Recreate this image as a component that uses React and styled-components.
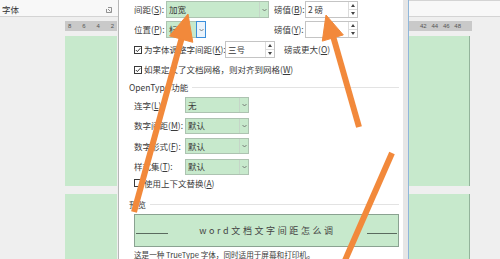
import React from 'react';
import styled, { createGlobalStyle } from 'styled-components';

const Global = createGlobalStyle`
  html, body { margin: 0; padding: 0; }
  body {
    width: 500px; height: 259px; overflow: hidden; background: #eeeeee;
    font-family: "Noto Sans CJK SC", "Noto Sans", sans-serif;
    color: #333;
  }
`;

const FONT = `"Noto Sans CJK SC", "Noto Sans", sans-serif`;

const Screen = styled.div`
  position: relative;
  width: 500px;
  height: 259px;
  display: flex;
  overflow: hidden;
  background: #eeeeee;
  font-family: ${FONT};
`;

/* ---------- side panes (document view) ---------- */
const SidePane = styled.div`
  flex: none;
  width: ${p => p.$w}px;
  display: flex;
  flex-direction: column;
  background: #efefef;
  border-right: ${p => (p.$right ? '1px solid #b7b7b7' : 'none')};
  border-left: ${p => (p.$left ? '1px solid #8fb6da' : 'none')};
`;

const RibbonStrip = styled.div`
  height: 17px;
  flex: none;
  background: #f8f8f8;
  border-bottom: 1px solid #d4d4d4;
  border-top: ${p => (p.$top ? '1px solid #d4d4d4' : 'none')};
  box-sizing: border-box;
  display: flex;
  align-items: flex-end;
  justify-content: space-between;
  padding: 0 6px 1px 2px;
  font-size: 8.5px;
  color: #333;
`;

const Launcher = styled.svg`
  width: 6px;
  height: 6px;
  margin-bottom: 2px;
`;

const PaneBody = styled.div`
  flex: 1;
  display: flex;
  flex-direction: row;
`;

const Spacer = styled.div`
  flex: none;
  width: ${p => p.$w}px;
`;

const DocColumn = styled.div`
  flex: none;
  width: ${p => p.$w}px;
  display: flex;
  flex-direction: column;
`;

const Ruler = styled.div`
  margin-top: 4px;
  height: 10px;
  width: ${p => p.$w}px;
  background: #c9c9c9;
  display: flex;
  align-items: center;
  justify-content: space-between;
  padding: 0 ${p => p.$pad}px;
  box-sizing: border-box;
  font-size: 6px;
  color: #555;
  font-family: "Liberation Sans", sans-serif;
`;

const Page = styled.div`
  margin-top: ${p => p.$mt}px;
  height: ${p => (p.$h ? `${p.$h}px` : 'auto')};
  flex: ${p => (p.$h ? 'none' : '1')};
  width: ${p => p.$w}px;
  background: #c7e9cc;
  box-sizing: border-box;
  border-right: ${p => (p.$edge ? '1px solid #93b39b' : 'none')};
`;

const GapStrip = styled.div`
  flex: none;
  width: 5px;
  background: #e6e6e6;
`;

/* ---------- dialog ---------- */
const Dialog = styled.div`
  flex: none;
  width: 284px;
  background: #ffffff;
  display: flex;
  flex-direction: column;
  padding: 1px 4px 0 15px;
  box-sizing: border-box;
  font-size: 8.5px;
  color: #3a3a3a;
`;

const Row = styled.div`
  display: flex;
  align-items: center;
  height: ${p => p.$h || 17}px;
  margin-top: ${p => p.$mt || 0}px;
  flex: none;
`;

const Label = styled.span`
  flex: none;
  width: ${p => (p.$w ? `${p.$w}px` : 'auto')};
  margin-left: ${p => p.$ml || 0}px;
  white-space: nowrap;
  line-height: 1;
`;

const Combo = styled.div`
  flex: none;
  display: flex;
  width: ${p => p.$w}px;
  height: 100%;
  box-sizing: border-box;
  border: 1px solid #adc3b1;
  background: #c7e9cc;
  margin-left: ${p => p.$ml || 0}px;
`;

const ComboText = styled.span`
  flex: 1;
  display: flex;
  align-items: center;
  padding-left: 2px;
  line-height: 1;
  white-space: nowrap;
  overflow: hidden;
`;

const ComboArrow = styled.span`
  flex: none;
  width: ${p => (p.$hot ? 10 : 9)}px;
  display: flex;
  align-items: center;
  justify-content: center;
  box-sizing: border-box;
  border-left: 1px solid ${p => (p.$hot ? '#3b8fdb' : '#c5d6c8')};
  ${p => p.$hot && 'border: 1px solid #3b8fdb; background: #eaf3fb; margin: -1px -1px -1px 0; height: calc(100% + 2px);'}
`;

const Spin = styled.div`
  flex: none;
  display: flex;
  width: ${p => p.$w}px;
  height: 100%;
  box-sizing: border-box;
  border: 1px solid #c4c4c4;
  background: #fff;
  margin-left: ${p => p.$ml || 0}px;
`;

const SpinText = styled.span`
  flex: 1;
  display: flex;
  align-items: center;
  padding-left: 2px;
  line-height: 1;
  white-space: nowrap;
`;

const SpinButtons = styled.span`
  flex: none;
  width: 8px;
  display: flex;
  flex-direction: column;
  border-left: 1px solid #dcdcdc;
`;

const SpinHalf = styled.span`
  flex: 1;
  display: flex;
  align-items: center;
  justify-content: center;
  border-top: ${p => (p.$bottom ? '1px solid #dcdcdc' : 'none')};
`;

const CheckBox = styled.span`
  flex: none;
  width: 8px;
  height: 8px;
  box-sizing: border-box;
  border: 1px solid #3a3a3a;
  background: #fff;
  margin-right: 2px;
  display: flex;
  align-items: center;
  justify-content: center;
`;

const SectionHead = styled.div`
  display: flex;
  align-items: center;
  height: 10px;
  margin-top: ${p => p.$mt}px;
  margin-left: -5px;
  flex: none;
`;

const SectionTitle = styled.span`
  flex: none;
  line-height: 1;
  margin-right: 4px;
`;

const SectionRule = styled.span`
  flex: 1;
  height: 0;
  border-top: 1px solid #e3e3e3;
`;

const Preview = styled.div`
  margin-top: 5px;
  flex: none;
  width: 265px;
  height: 33px;
  box-sizing: border-box;
  border: 1px solid #8aa291;
  background: #c7e9cc;
  display: flex;
  align-items: flex-start;
  padding: 0 1px;
`;

const BaseLine = styled.span`
  flex: none;
  width: ${p => p.$w}px;
  margin-top: 18px;
  border-top: 1px solid #5a6a5e;
`;

const PreviewText = styled.span`
  flex: 1;
  align-self: center;
  text-align: center;
  font-size: 9px;
  letter-spacing: 2.6px;
  color: #444;
  white-space: nowrap;
  line-height: 1;
`;

const Note = styled.div`
  margin-top: 3px;
  font-size: 7.6px;
  line-height: 9px;
  white-space: nowrap;
`;

const Overlay = styled.svg`
  position: absolute;
  left: 0;
  top: 0;
  width: 500px;
  height: 259px;
  pointer-events: none;
`;

const Chevron = () => (
  <svg width="5" height="4" viewBox="0 0 5 4">
    <polyline points="0.5,1 2.5,3 4.5,1" fill="none" stroke="#666" strokeWidth="0.8" />
  </svg>
);

const Tri = ({ down }) => (
  <svg width="4" height="3" viewBox="0 0 4 3">
    <polygon points={down ? '0,0 4,0 2,3' : '0,3 4,3 2,0'} fill="#444" />
  </svg>
);

const Check = () => (
  <svg width="6" height="6" viewBox="0 0 6 6">
    <polyline points="0.8,3 2.4,4.6 5.3,1.2" fill="none" stroke="#222" strokeWidth="0.9" />
  </svg>
);

const Dropdown = ({ w, ml, text, hot }) => (
  <Combo $w={w} $ml={ml}>
    <ComboText>{text}</ComboText>
    <ComboArrow $hot={hot}><Chevron /></ComboArrow>
  </Combo>
);

const SpinBox = ({ w, ml, text }) => (
  <Spin $w={w} $ml={ml}>
    <SpinText>{text}</SpinText>
    <SpinButtons>
      <SpinHalf><Tri /></SpinHalf>
      <SpinHalf $bottom><Tri down /></SpinHalf>
    </SpinButtons>
  </Spin>
);

export default function App() {
  return (
    <Screen>
      <Global />
      <SidePane $w={118} $right>
        <RibbonStrip>
          <span>字体</span>
          <Launcher viewBox="0 0 6 6">
            <polyline points="0.5,2 0.5,5.5 5.5,5.5 5.5,0.5 2,0.5" fill="none" stroke="#777" strokeWidth="0.8" />
            <line x1="2" y1="2" x2="4.5" y2="4.5" stroke="#777" strokeWidth="0.8" />
          </Launcher>
        </RibbonStrip>
        <PaneBody>
          <Spacer $w={65} />
          <DocColumn $w={52}>
            <Ruler $w={52} $pad={3}>
              <span>8</span><span>6</span><span>4</span><span>2</span>
            </Ruler>
            <Page $mt={5} $h={150} $w={52} />
            <Page $mt={8} $w={52} />
          </DocColumn>
        </PaneBody>
      </SidePane>

      <Dialog>
        <Row>
          <Label $w={32}>间距(<u>S</u>):</Label>
          <Dropdown w={103} text="加宽" />
          <Label $w={31} $ml={5}>磅值(<u>B</u>):</Label>
          <SpinBox w={53} text="2 磅" />
        </Row>
        <Row $mt={3}>
          <Label $w={32}>位置(<u>P</u>):</Label>
          <Dropdown w={40} text="标准" hot />
          <Label $w={31} $ml={68}>磅值(<u>Y</u>):</Label>
          <SpinBox w={53} text="" />
        </Row>
        <Row $mt={3}>
          <CheckBox><Check /></CheckBox>
          <Label $w={81}>为字体调整字间距(<u>K</u>):</Label>
          <SpinBox w={50} text="三号" />
          <Label $ml={9}>磅或更大(<u>O</u>)</Label>
        </Row>
        <Row $mt={3}>
          <CheckBox><Check /></CheckBox>
          <Label>如果定义了文档网格，则对齐到网格(<u>W</u>)</Label>
        </Row>

        <SectionHead $mt={4}>
          <SectionTitle>OpenType 功能</SectionTitle>
          <SectionRule />
        </SectionHead>

        <Row $h={16} $mt={5}>
          <Label $w={51}>连字(<u>L</u>):</Label>
          <Dropdown w={64} text="无" />
        </Row>
        <Row $h={16} $mt={4.5}>
          <Label $w={51}>数字间距(<u>M</u>):</Label>
          <Dropdown w={64} text="默认" />
        </Row>
        <Row $h={16} $mt={4.5}>
          <Label $w={51}>数字形式(<u>F</u>):</Label>
          <Dropdown w={64} text="默认" />
        </Row>
        <Row $h={16} $mt={4.5}>
          <Label $w={51}>样式集(<u>T</u>):</Label>
          <Dropdown w={64} text="默认" />
        </Row>
        <Row $h={10} $mt={3.5}>
          <CheckBox />
          <Label>使用上下文替换(<u>A</u>)</Label>
        </Row>

        <SectionHead $mt={11}>
          <SectionTitle>预览</SectionTitle>
          <SectionRule />
        </SectionHead>

        <Preview>
          <BaseLine $w={32} />
          <PreviewText>word文档文字间距怎么调</PreviewText>
          <BaseLine $w={30} />
        </Preview>

        <Note>这是一种 TrueType 字体，同时适用于屏幕和打印机。</Note>
      </Dialog>

      <GapStrip />

      <SidePane $w={93} $left>
        <RibbonStrip $top />
        <PaneBody>
          <DocColumn $w={63}>
            <Ruler $w={63} $pad={11}>
              <span>42</span><span>44</span><span>46</span><span>48</span>
            </Ruler>
            <Page $mt={5} $h={150} $w={61} $edge />
            <Page $mt={8} $w={61} $edge />
          </DocColumn>
        </PaneBody>
      </SidePane>

      <Overlay viewBox="0 0 500 259">
        <g fill="#f2893b" stroke="#f2893b">
          <line x1="134" y1="212" x2="182" y2="37" strokeWidth="6" />
          <polygon points="188,14 192.8,42.3 169.6,35.9" strokeWidth="1" />
          <line x1="359" y1="127" x2="333" y2="36" strokeWidth="6" />
          <polygon points="326,15 343.3,34.9 322.3,41.1" strokeWidth="1" />
          <line x1="392" y1="153" x2="343" y2="265" strokeWidth="6" />
        </g>
      </Overlay>
    </Screen>
  );
}
